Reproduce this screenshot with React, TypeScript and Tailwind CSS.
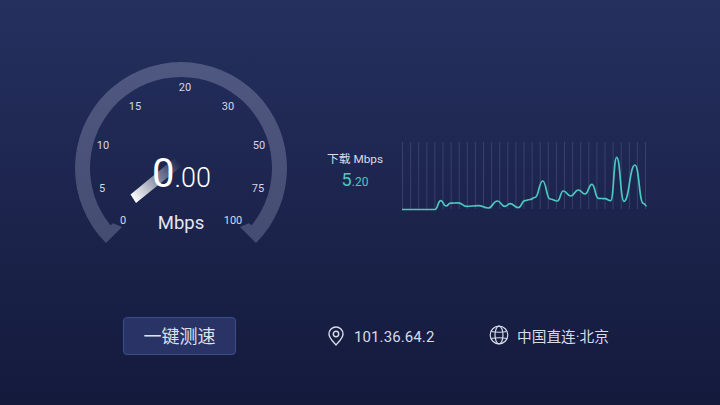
const FONT = "font-['Roboto','Noto_Sans_CJK_SC',sans-serif]";

const TICKS = [
  { label: '0', x: 48, y: 162 },
  { label: '5', x: 27, y: 130 },
  { label: '10', x: 28, y: 87 },
  { label: '15', x: 60, y: 48 },
  { label: '20', x: 110, y: 29 },
  { label: '30', x: 153, y: 48 },
  { label: '50', x: 184, y: 87 },
  { label: '75', x: 183, y: 130 },
  { label: '100', x: 158, y: 162 },
];

// traced from the chart, in px relative to its top-left corner
const CURVE: [number, number][] = [
  [0, 69.5], [33, 69.5], [38.7, 60.7], [44, 66], [48.5, 63.2], [56.3, 62.8], [64.7, 66.3], [76.3, 65.7],
  [86.3, 68], [95.3, 61], [103, 66.3], [108, 63.7], [116.3, 67.7], [123, 60.7], [128, 59.5], [133, 57.5],
  [140.7, 41], [148, 59], [155.3, 61], [161.3, 51], [168.7, 56], [176.3, 50], [183, 54], [190, 44.3],
  [196.3, 58.3], [203, 58.7], [208.7, 60.7], [214.7, 17.3], [222, 61.3], [233, 25], [241.3, 63.3], [244.7, 66],
];

function bumpPath(points: [number, number][]) {
  let d = `M${points[0][0]} ${points[0][1]}`;
  for (let i = 1; i < points.length; i++) {
    const [x0, y0] = points[i - 1];
    const [x1, y1] = points[i];
    const mid = (x0 + x1) / 2;
    d += ` C${mid} ${y0} ${mid} ${y1} ${x1} ${y1}`;
  }
  return d;
}

function Gauge() {
  return (
    <div className="relative w-[212px] h-[182px] shrink-0">
      <svg width="212" height="182" viewBox="0 0 212 182" className="block">
        <defs>
          <linearGradient id="needle" x1="58" y1="137" x2="104" y2="100" gradientUnits="userSpaceOnUse">
            <stop offset="0" stopColor="#ffffff" />
            <stop offset="1" stopColor="#ffffff" stopOpacity="0" />
          </linearGradient>
          <linearGradient id="ring" x1="0" y1="0" x2="0" y2="182" gradientUnits="userSpaceOnUse">
            <stop offset="0" stopColor="#4f5880" />
            <stop offset="1" stopColor="#454c72" />
          </linearGradient>
        </defs>
        <path
          d="M31 181 L47 165 L38.300 161.300 L35.400 163.300 A 91 91 0 1 1 176.600 163.300 L173.700 161.300 L165 165 L181 181 A 106 106 0 1 0 31 181 Z"
          fill="url(#ring)"
        />
        <polygon points="55.500,132.500 61,141 108,103 101,95" fill="url(#needle)" />
        {TICKS.map((t) => (
          <text key={t.label} x={t.x} y={t.y} textAnchor="middle" fontSize="11" fill="#d5d8e6" fontFamily="Roboto, sans-serif">
            {t.label}
          </text>
        ))}
      </svg>
      <div className="absolute left-[77px] top-[92px] flex items-baseline text-white leading-none">
        <span className="text-[40px] leading-none">0</span>
        <span className="text-[27px] leading-none font-light">.00</span>
      </div>
      <div className="absolute left-0 w-full top-[150px] text-center text-[18.500px] leading-[22px] text-[#e4e6f0]">Mbps</div>
    </div>
  );
}

function SpeedChart() {
  return (
    <svg width="246" height="72" viewBox="0 0 246 72" className="block">
      {Array.from({ length: 31 }, (_, i) => (
        <line key={i} x1={0.5 + i * 8.1} y1="2" x2={0.5 + i * 8.1} y2="69" stroke="#4a5282" strokeOpacity="0.6" strokeWidth="1" />
      ))}
      <path d={bumpPath(CURVE)} fill="none" stroke="#4cc8c0" strokeWidth="1.700" />
    </svg>
  );
}

function PinIcon() {
  return (
    <svg width="18" height="20" viewBox="0 0 18 20" fill="none" stroke="#d8dbe8" strokeWidth="1.400">
      <path d="M9 19 C6 15.500 2 12 2 8 A7 7 0 0 1 16 8 C16 12 12 15.500 9 19 Z" strokeLinejoin="round" />
      <circle cx="9" cy="8" r="2.700" />
    </svg>
  );
}

function GlobeIcon() {
  return (
    <svg width="20" height="20" viewBox="0 0 20 20" fill="none" stroke="#d8dbe8" strokeWidth="1.200">
      <circle cx="10" cy="10" r="8.800" />
      <ellipse cx="10" cy="10" rx="4" ry="8.800" />
      <path d="M2.200 6.500 C6 7.500 14 7.500 17.800 6.500 M2.200 13.500 C6 12.500 14 12.500 17.800 13.500" />
    </svg>
  );
}

export default function App() {
  return (
    <div className={`${FONT} w-[720px] h-[405px] overflow-hidden flex flex-col bg-gradient-to-b from-[#25305f] to-[#141a3c]`}>
      <div className="flex pt-[62px] pl-[75px] h-[317px]">
        <Gauge />
        <div className="flex items-start pt-[78px] ml-[40px]">
          <div className="w-[56px] pt-[11px] flex flex-col items-center">
            <span className="text-[11.800px] leading-[16px] text-[#d8dbe8] whitespace-nowrap">下载 Mbps</span>
            <span className="mt-[2px] leading-[22px] text-[#4cc8c0] whitespace-nowrap">
              <span className="text-[18px]">5</span>
              <span className="text-[12px]">.20</span>
            </span>
          </div>
          <div className="ml-[19px]">
            <SpeedChart />
          </div>
        </div>
      </div>
      <div className="flex items-center pl-[123px]">
        <button className="w-[113px] h-[38px] rounded-[4px] border border-[#37508a] bg-[#2a3366] text-[18px] text-[#dfe2ee]">
          一键测速
        </button>
        <div className="flex items-center ml-[91px] w-[162px] -mt-[1px]">
          <PinIcon />
          <span className="ml-[9px] mt-[3px] text-[15px] tracking-[0.1px] text-[#d8dbe8]">101.36.64.2</span>
        </div>
        <div className="flex items-center -mt-[1px]">
          <GlobeIcon />
          <span className="ml-[8px] mt-[3px] text-[14.700px] text-[#d8dbe8]">中国直连·北京</span>
        </div>
      </div>
    </div>
  );
}
